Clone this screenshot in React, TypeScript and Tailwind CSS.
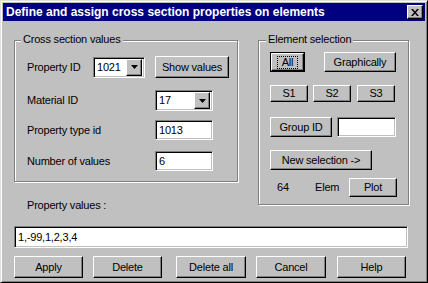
import React from 'react';

const raised =
  'border border-t-white border-l-white border-r-black border-b-black shadow-[inset_-1px_-1px_0_#808080] bg-[#c0c0c0] flex items-center justify-center';
const sunken =
  'border border-t-[#808080] border-l-[#808080] border-r-white border-b-white shadow-[inset_1px_1px_0_#000,inset_-1px_-1px_0_#c0c0c0] bg-white flex items-center';
const etched =
  'relative border border-[#808080] shadow-[inset_1px_1px_0_#fff,1px_1px_0_#fff]';

function Btn({ className, children }: { className: string; children: React.ReactNode }) {
  return <div className={`${raised} ${className}`}>{children}</div>;
}

function Field({ className, value }: { className: string; value?: string }) {
  return (
    <div className={`${sunken} ${className} pl-[3px]`}>
      <span>{value}</span>
    </div>
  );
}

function Combo({ className, value }: { className: string; value: string }) {
  return (
    <div className={`${sunken} ${className} pl-[3px] pr-[2px] justify-between`}>
      <span>{value}</span>
      <div className={`${raised} w-[16px] h-[17px]`}>
        <svg width="7" height="4" viewBox="0 0 7 4">
          <path d="M0 0h7L3.5 4z" fill="#000" />
        </svg>
      </div>
    </div>
  );
}

function GroupLabel({ className, children }: { className: string; children: React.ReactNode }) {
  return (
    <span className={`absolute -top-[8px] bg-[#c0c0c0] px-[2px] leading-[13px] ${className}`}>
      {children}
    </span>
  );
}

export default function App() {
  return (
    <div
      className="w-[428px] h-[283px] bg-[#c0c0c0] border border-t-[#dfdfdf] border-l-[#dfdfdf] border-r-black border-b-black shadow-[inset_1px_1px_0_#fff,inset_-1px_-1px_0_#808080] p-[2px] text-[11px] tracking-[-0.2px] text-black leading-[13px] overflow-hidden"
      style={{ fontFamily: '"Liberation Sans", Arial, sans-serif' }}
    >
      {/* title bar */}
      <div className="h-[18px] bg-[#000080] flex items-center justify-between pl-[3px] pr-[2px]">
        <span className="text-white font-bold text-[12px] tracking-normal">
          Define and assign cross section properties on elements
        </span>
        <div className={`${raised} w-[16px] h-[14px]`}>
          <svg width="8" height="7" viewBox="0 0 8 7">
            <path d="M0 0h2l2 2.5L6 0h2L5 3.5 8 7H6L4 4.5 2 7H0l3-3.5z" fill="#000" />
          </svg>
        </div>
      </div>

      <div className="px-[11px]">
        <div className="flex items-start mt-[19px]">
          {/* left column */}
          <div className="flex flex-col">
            <div className={`${etched} w-[224px] h-[142px] pt-[15px] pl-[12px]`}>
              <GroupLabel className="left-[6px]">Cross section values</GroupLabel>
              <div className="flex items-center h-[22px]">
                <span className="w-[66px]">Property ID</span>
                <Combo className="w-[52px] h-[21px]" value="1021" />
                <Btn className="w-[74px] h-[22px] ml-[10px]">Show values</Btn>
              </div>
              <div className="flex items-center h-[21px] mt-[12px]">
                <span className="w-[128px]">Material ID</span>
                <Combo className="w-[58px] h-[21px]" value="17" />
              </div>
              <div className="flex items-center h-[20px] mt-[9px]">
                <span className="w-[128px]">Property type id</span>
                <Field className="w-[58px] h-[20px]" value="1013" />
              </div>
              <div className="flex items-center h-[20px] mt-[11px]">
                <span className="w-[128px]">Number of values</span>
                <Field className="w-[58px] h-[20px]" value="6" />
              </div>
            </div>
            <span className="mt-[17px] pl-[13px]">Property values :</span>
          </div>

          {/* right group */}
          <div className={`${etched} w-[151px] h-[165px] ml-[20px] pt-[11px] pl-[11px]`}>
            <GroupLabel className="left-[7px]">Element selection</GroupLabel>
            <div className="flex items-center">
              <div className="border border-black">
                <Btn className="w-[33px] h-[18px]">
                  <span className="border border-dotted border-black px-[4px] leading-[11px]">All</span>
                </Btn>
              </div>
              <Btn className="w-[72px] h-[20px] ml-[19px]">Graphically</Btn>
            </div>
            <div className="flex items-center gap-[5px] mt-[13px]">
              <Btn className="w-[38px] h-[17px]">S1</Btn>
              <Btn className="w-[38px] h-[17px]">S2</Btn>
              <Btn className="w-[38px] h-[17px] ml-px">S3</Btn>
            </div>
            <div className="flex items-center mt-[15px]">
              <Btn className="w-[62px] h-[20px]">Group ID</Btn>
              <Field className="w-[59px] h-[20px] ml-[5px]" />
            </div>
            <Btn className="w-[102px] h-[20px] mt-[13px]">New selection -&gt;</Btn>
            <div className="flex items-center mt-[8px] h-[19px]">
              <span className="ml-[7px] w-[38px]">64</span>
              <span className="w-[34px]">Elem</span>
              <Btn className="w-[48px] h-[19px]">Plot</Btn>
            </div>
          </div>
        </div>

        <Field className="w-[394px] h-[22px] mt-[14px]" value="1,-99,1,2,3,4" />

        <div className="flex items-center mt-[8px]">
          <Btn className="w-[69px] h-[22px]">Apply</Btn>
          <Btn className="w-[69px] h-[22px] ml-[10px]">Delete</Btn>
          <Btn className="w-[70px] h-[22px] ml-[14px]">Delete all</Btn>
          <Btn className="w-[70px] h-[22px] ml-[10px]">Cancel</Btn>
          <Btn className="w-[69px] h-[22px] ml-[11px]">Help</Btn>
        </div>
      </div>
    </div>
  );
}
